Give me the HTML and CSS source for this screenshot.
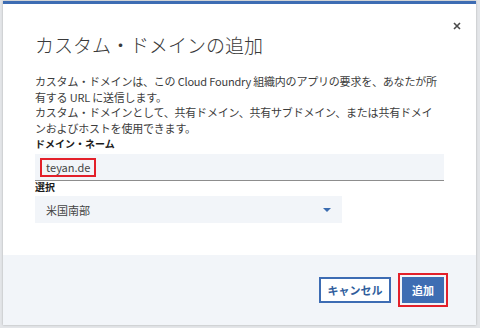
FILE: index.html
```html
<!DOCTYPE html>
<html lang="ja">
<head>
  <meta charset="UTF-8" />
  <meta name="viewport" content="width=device-width, initial-scale=1.0"/>
  <title>カスタム・ドメインの追加</title>
  <link rel="stylesheet" href="styles.css">
</head>
<body>
  <div class="modal">
    <button class="modal-close" type="button" aria-label="閉じる">
      <svg width="8" height="8" viewBox="0 0 8 8"><path d="M1 1L7 7M7 1L1 7" stroke="#4a4a4a" stroke-width="1.6" fill="none"/></svg>
    </button>

    <div class="modal-body">
      <h2 class="modal-title">カスタム・ドメインの追加</h2>

      <p class="modal-text">
        <span class="sentence">カスタム・ドメインは、この Cloud Foundry 組織内のアプリの要求を、あなたが所有する URL に送信します。</span>
        <span class="sentence">カスタム・ドメインとして、共有ドメイン、共有サブドメイン、または共有ドメインおよびホストを使用できます。</span>
      </p>

      <div class="field">
        <label class="field-label" for="domain">ドメイン・ネーム</label>
        <div class="text-input" id="domain">
          <span class="highlight">teyan.de</span>
        </div>
      </div>

      <div class="field">
        <label class="field-label" for="region">選択</label>
        <div class="select" id="region">
          <span>米国南部</span>
          <span class="caret"></span>
        </div>
      </div>
    </div>

    <div class="modal-footer">
      <button class="btn btn-secondary" type="button">キャンセル</button>
      <button class="btn btn-primary highlight-outline" type="button">追加</button>
    </div>
  </div>
</body>
</html>
```

FILE: styles.css
```css
body {
  margin: 0;
  padding: 1px 4px 3px 3px;
  background: #e3e5e8;
  font-family: "Noto Sans CJK JP", "Noto Sans", sans-serif;
  color: #333;
}

.modal {
  position: relative;
  background: white;
  border-top: 3px solid #3d6cb3;
  box-shadow: 0 0 2px rgba(0, 0, 0, 0.25);
  display: flex;
  flex-direction: column;
}

.modal-close {
  position: absolute;
  top: 14px;
  right: 11px;
  width: 16px;
  height: 16px;
  padding: 0;
  border: none;
  background: none;
  display: flex;
  align-items: center;
  justify-content: center;
}

.modal-body {
  padding: 27px 32px 32px;
}

.modal-title {
  margin: 0;
  font-size: 19px;
  line-height: 28px;
  font-weight: 300;
  color: #3a3a3a;
}

.modal-text {
  margin: 15px 0 0;
  max-width: 402px;
  font-size: 11px;
  line-height: 15.5px;
  letter-spacing: -0.2px;
  color: #3c3c3c;
}

.sentence {
  display: block;
}

.field {
  display: flex;
  flex-direction: column;
}

.field-label {
  font-size: 10px;
  line-height: 11px;
  font-weight: bold;
  color: #1b1b1b;
  margin-bottom: 4px;
}

.field:first-of-type .field-label {
  margin-top: 2px;
  line-height: 12px;
}

.text-input {
  background: #f2f5f9;
  padding: 4px 5px 3px;
  border-bottom: 1px solid #8d8d8d;
  font-size: 11px;
  color: #444;
}

.highlight {
  display: inline-block;
  border: 2px solid #e3202a;
  padding: 0 4px;
  line-height: 15px;
}

.select {
  width: 307px;
  box-sizing: border-box;
  height: 27px;
  background: #f2f5f9;
  padding: 0 11px;
  display: flex;
  align-items: center;
  justify-content: space-between;
  font-size: 11px;
  color: #444;
}

.caret {
  width: 0;
  height: 0;
  border-left: 4px solid transparent;
  border-right: 4px solid transparent;
  border-top: 4px solid #3b6cb0;
}

.modal-footer {
  background: #f2f5f9;
  height: 70px;
  padding: 0 32px;
  display: flex;
  align-items: center;
  justify-content: flex-end;
  gap: 11px;
}

.btn {
  height: 26px;
  box-sizing: border-box;
  font-family: inherit;
  font-size: 11px;
  font-weight: bold;
  border-radius: 0;
  cursor: pointer;
}

.btn-secondary {
  width: 72px;
  background: white;
  color: #2f5d9c;
  border: 2px solid #3d6cb3;
}

.btn-primary {
  width: 42px;
  background: #3e6db3;
  color: white;
  border: none;
}

.highlight-outline {
  outline: 2px solid #e3202a;
  outline-offset: 2px;
}
```
